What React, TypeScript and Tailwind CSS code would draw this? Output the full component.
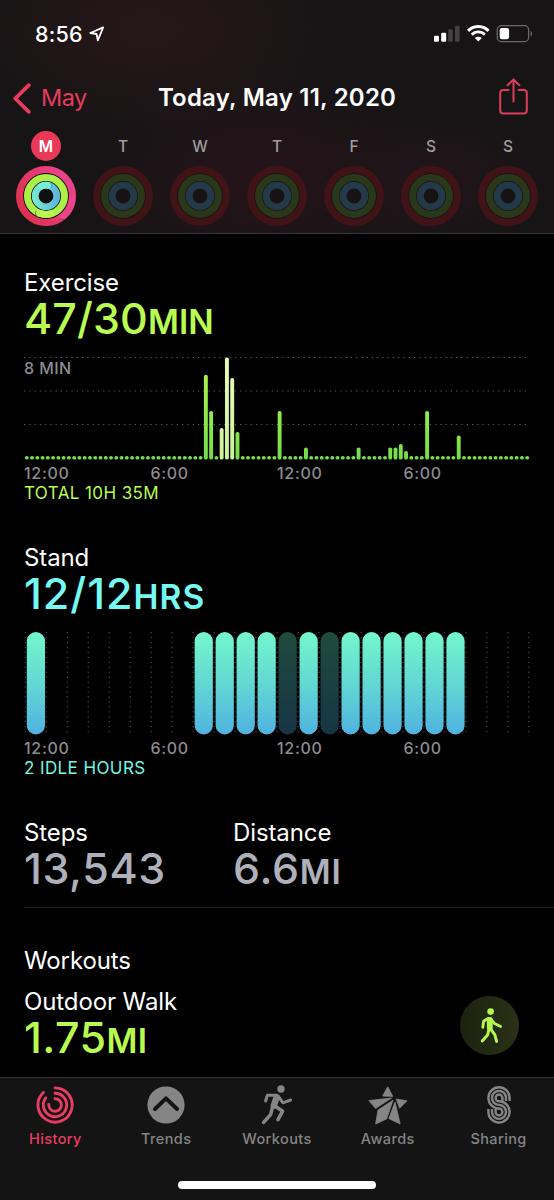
import type { ReactNode } from 'react'

const weekDays = ['M', 'T', 'W', 'T', 'F', 'S', 'S']
const hours = ['12:00', '6:00', '12:00', '6:00']

// Top of each bar inside the 112px tall exercise chart, keyed by quarter hour
const exerciseBars: Record<number, { top: number; active?: boolean }> = {
  34: { top: 24.8 },
  35: { top: 61 },
  37: { top: 78, active: true },
  38: { top: 7.5, active: true },
  39: { top: 28, active: true },
  40: { top: 82 },
  48: { top: 61 },
  53: { top: 97.5 },
  63: { top: 97.5 },
  69: { top: 97.5 },
  70: { top: 97.5 },
  71: { top: 94 },
  72: { top: 101 },
  76: { top: 61 },
  82: { top: 85.5 },
}

const stoodHours = [0, 8, 9, 10, 11, 13, 15, 16, 17, 18, 19, 20]
const idleHours = [12, 14]

function Rings({ active }: { active: boolean }) {
  if (!active) {
    return (
      <svg className="h-[60px] w-[60px]" viewBox="-30 -30 60 60" fill="none">
        <circle r="26.2" stroke="#401317" strokeWidth="7.4" />
        <circle r="22.7" fill="#171315" />
        <circle r="18.4" stroke="#29381a" strokeWidth="7" />
        <circle r="10.8" stroke="#253a49" strokeWidth="6.8" />
      </svg>
    )
  }
  return (
    <svg className="h-[60px] w-[60px]" viewBox="-30 -30 60 60" fill="none">
      <defs>
        <linearGradient id="move" x1="0" y1="1" x2="1" y2="0.4">
          <stop offset="0" stopColor="#dd2f48" />
          <stop offset="1" stopColor="#ea4287" />
        </linearGradient>
        <linearGradient id="stand-ring" x1="0" y1="0" x2="1" y2="0">
          <stop offset="0" stopColor="#75e8d4" />
          <stop offset="1" stopColor="#5fb9dc" />
        </linearGradient>
      </defs>
      <circle r="26.2" stroke="url(#move)" strokeWidth="7.6" />
      <path d="M25.8 4.5 A26.2 26.2 0 0 1 16.7 20.2" stroke="#ec4488" strokeWidth="7.4" strokeLinecap="round" />
      <path d="M13.8 22.1 A3.7 3.7 0 0 0 18.5 23.3" stroke="#a52357" strokeWidth="0.8" />
      <circle r="22.9" fill="#0d1010" />
      <circle r="18.5" stroke="#adf04a" strokeWidth="7" />
      <circle r="10.8" stroke="url(#stand-ring)" strokeWidth="6.8" />
      <path d="M-6.6 17.3 A18.5 18.5 0 0 0 5 17.8" stroke="#b8f850" strokeWidth="6.9" strokeLinecap="round" />
      <path d="M-8.2 20.7 A3.7 3.7 0 0 1 -9.8 15.2" stroke="#4f8b22" strokeWidth="1" />
      <path d="M-4 -10 A10.8 10.8 0 0 1 2.2 -10.6" stroke="#78efd8" strokeWidth="6.7" strokeLinecap="round" />
      <path d="M3.4 -14 A3.7 3.7 0 0 1 4.6 -7.8" stroke="#3c8b9b" strokeWidth="0.8" />
    </svg>
  )
}

function StatusBar() {
  return (
    <div className="flex h-[68px] items-center justify-between pr-[21px] pl-[35px]">
      <div className="flex items-center gap-[6px]">
        <span className="text-[21.5px] leading-7 font-medium tracking-[0.2px]">8:56</span>
        <svg className="h-4 w-4" viewBox="0 0 16 16" fill="none" stroke="#fff" strokeWidth="1.8" strokeLinejoin="round">
          <path d="M14.2 1.4 L1.2 7 L7.6 8 L8.8 14.3 Z" />
        </svg>
      </div>
      <svg className="h-[18px] w-[99px]" viewBox="0 0 99 18" fill="none">
        <rect x="0" y="10.7" width="5" height="6" rx="1.2" fill="#fff" />
        <rect x="7.2" y="7.7" width="5" height="9" rx="1.2" fill="#fff" />
        <rect x="14.2" y="4.2" width="4.6" height="12.5" rx="1.2" fill="#434143" />
        <rect x="21" y="0.8" width="4.6" height="15.9" rx="1.2" fill="#434143" />
        <g stroke="#fff" strokeWidth="3">
          <path d="M34.1 5.9 A14 14 0 0 1 54.5 5.9" />
          <path d="M37.8 9.7 A9 9 0 0 1 50.8 9.7" strokeWidth="2.8" />
        </g>
        <path d="M44.3 16.6 L40.8 13.1 A5 5 0 0 1 47.8 13.1 Z" fill="#fff" />
        <rect x="63.2" y="0.7" width="31.4" height="15.9" rx="4.2" stroke="#6b696b" strokeWidth="1.3" />
        <rect x="65.7" y="3" width="9.4" height="11.2" rx="2.2" fill="#fff" />
        <path d="M96.6 5.7 A3.4 3.4 0 0 1 96.6 11.5 Z" fill="#6b696b" />
      </svg>
    </div>
  )
}

function Header() {
  return (
    <header className="h-[234px] border-b border-[#39373a] bg-[#161415] bg-[radial-gradient(ellipse_200px_110px_at_150px_30px,#271719,transparent),radial-gradient(ellipse_190px_110px_at_260px_175px,#25141a,transparent),radial-gradient(ellipse_130px_90px_at_440px_180px,#21151a,transparent)]">
      <StatusBar />
      <div className="flex h-[60px] items-center justify-between pr-[26px] pl-[13px]">
        <div className="flex w-[100px] items-center gap-[10px] text-[#e63d5c]">
          <svg className="h-[31px] w-[18px]" viewBox="0 0 18 31" fill="none" stroke="currentColor" strokeWidth="3.8" strokeLinecap="round" strokeLinejoin="round">
            <path d="M15.8 2.2 L2.3 15.5 L15.8 28.8" />
          </svg>
          <span className="text-[23.5px] leading-8 tracking-[-0.6px]">May</span>
        </div>
        <h1 className="text-[24px] leading-8 font-semibold tracking-[0.22px] whitespace-nowrap">Today, May 11, 2020</h1>
        <div className="flex w-[87px] justify-end pb-[3px]">
          <svg className="h-[37px] w-[29px]" viewBox="0 0 29 37" fill="none" stroke="#dc3d5a" strokeWidth="2" strokeLinecap="round" strokeLinejoin="round">
            <path d="M9.5 12 H4.2 A3 3 0 0 0 1.2 15 V32.6 A3 3 0 0 0 4.2 35.6 H24.8 A3 3 0 0 0 27.8 32.6 V15 A3 3 0 0 0 24.8 12 H19.5" />
            <path d="M14.5 23.5 V1.5 M8.6 7.3 L14.5 1.4 L20.4 7.3" />
          </svg>
        </div>
      </div>
      <div className="flex justify-between pr-[16px] pl-[16px]">
        {weekDays.map((day, i) => (
          <div key={i} className="flex w-[60px] flex-col items-center gap-[5px] pt-[3px]">
            <span
              className={
                i === 0
                  ? 'flex h-[30px] w-[30px] items-center justify-center rounded-full bg-[#e83a57] pt-px text-[15.5px] font-semibold'
                  : 'flex h-[30px] w-[30px] items-center justify-center pt-px text-[15.5px] font-medium text-[#a19c9f]'
              }
            >
              {day}
            </span>
            <Rings active={i === 0} />
          </div>
        ))}
      </div>
    </header>
  )
}

function Metric({ label, value, unit, className }: { label: string; value: string; unit?: string; className: string }) {
  return (
    <div>
      <h2 className="h-8 pt-px text-[24px] leading-8 font-normal tracking-[-0.1px]">{label}</h2>
      <p className={`h-10 text-[43px] leading-10 font-medium whitespace-nowrap ${className}`}>
        {value}
        {unit && <span className="text-[33.5px] leading-none font-semibold">{unit}</span>}
      </p>
    </div>
  )
}

function HourLabels() {
  return (
    <div className="grid w-[506px] grid-cols-4 text-[16px] leading-5 font-medium tracking-[0.7px] text-[#8d8c91]">
      {hours.map((hour, i) => (
        <span key={i}>{hour}</span>
      ))}
    </div>
  )
}

function ExerciseChart() {
  return (
    <div className="relative mt-3 h-[113px]">
      <svg className="h-[112px] w-[508px]" viewBox="0 0 508 112" fill="none">
        <defs>
          <linearGradient id="exercise" x1="0" y1="7" x2="0" y2="110" gradientUnits="userSpaceOnUse">
            <stop offset="0" stopColor="#b4f84e" />
            <stop offset="1" stopColor="#74dd49" />
          </linearGradient>
          <linearGradient id="workout" x1="0" y1="7" x2="0" y2="110" gradientUnits="userSpaceOnUse">
            <stop offset="0" stopColor="#e8fdb8" />
            <stop offset="1" stopColor="#cdf09c" />
          </linearGradient>
        </defs>
        {[7.5, 41, 74.5].map((y) => (
          <path key={y} d={`M0 ${y} H505`} stroke="#59595b" strokeWidth="1.1" strokeDasharray="1.3 3.97" />
        ))}
        {Array.from({ length: 96 }, (_, i) => {
          const bar = exerciseBars[i]
          const top = bar ? bar.top : 105.9
          return (
            <rect
              key={i}
              x={0.8 + i * 5.268}
              y={top}
              width="3.9"
              height={109.6 - top}
              rx="1.85"
              fill={bar?.active ? 'url(#workout)' : 'url(#exercise)'}
            />
          )
        })}
      </svg>
      <span className="absolute top-2 left-0 text-[16px] leading-5 font-medium tracking-[0.4px] text-[#8d8c91]">8 MIN</span>
    </div>
  )
}

function StandChart() {
  return (
    <div className="mt-3 h-[113px]">
      <svg className="h-[112px] w-[508px]" viewBox="0 0 508 112">
        <defs>
          <linearGradient id="stand" x1="0" y1="0" x2="0" y2="1">
            <stop offset="0" stopColor="#74f7cc" />
            <stop offset="0.5" stopColor="#62d8d3" />
            <stop offset="1" stopColor="#50b2e0" />
          </linearGradient>
          <linearGradient id="idle" x1="0" y1="0" x2="0" y2="1">
            <stop offset="0" stopColor="#204b3e" />
            <stop offset="1" stopColor="#163545" />
          </linearGradient>
        </defs>
        {Array.from({ length: 25 }, (_, i) => (
          <path key={i} d={`M${1.3 + i * 20.98} 7 V108`} stroke="#4c4c4e" strokeWidth="1.1" strokeDasharray="1.3 3.65" />
        ))}
        {stoodHours.map((h) => (
          <rect key={h} x={2.8 + h * 20.98} y="7" width="18.2" height="102.5" rx="9.1" fill="url(#stand)" />
        ))}
        {idleHours.map((h) => (
          <rect key={h} x={2.8 + h * 20.98} y="7" width="18.2" height="102.5" rx="9.1" fill="url(#idle)" />
        ))}
      </svg>
    </div>
  )
}

function WalkIcon() {
  return (
    <svg className="h-10 w-10" viewBox="0 0 40 40" fill="none" stroke="#b4f84e" strokeLinecap="round" strokeLinejoin="round">
      <circle cx="20.6" cy="5.6" r="3.3" fill="#b4f84e" stroke="none" />
      <path d="M19.8 14 V21.5" strokeWidth="5.8" />
      <path d="M18 12.4 L13.6 15.2 L12.8 21.3" strokeWidth="2.8" />
      <path d="M21 13 L24.6 17.6 L30.6 20.4" strokeWidth="2.8" />
      <path d="M19 23 L17.6 29 L12.2 35" strokeWidth="3" />
      <path d="M20.6 23 L24.8 28.6 L26.6 35.4" strokeWidth="3" />
    </svg>
  )
}

function HistoryIcon() {
  return (
    <svg className="h-10 w-10" viewBox="-20 -20 40 40" fill="none" stroke="currentColor" strokeWidth="2.9" strokeLinecap="round">
      <path d="M0 -17.1 A17.1 17.1 0 1 1 -11.6 -12.5" />
      <path d="M0 -11.7 A11.7 11.7 0 1 1 -9.2 -7.2" />
      <path d="M0 -6.3 A6.3 6.3 0 1 1 -6.2 -0.6" />
    </svg>
  )
}

function TrendsIcon() {
  return (
    <svg className="h-10 w-10" viewBox="-20 -20 40 40" fill="none">
      <circle r="18.6" fill="currentColor" />
      <path d="M-11 4 L0 -6.6 L11 4" stroke="#141414" strokeWidth="4" strokeLinecap="round" strokeLinejoin="round" />
    </svg>
  )
}

function RunIcon() {
  return (
    <svg className="h-10 w-10" viewBox="0 0 40 40" fill="none" stroke="currentColor" strokeLinecap="round" strokeLinejoin="round">
      <circle cx="24" cy="4" r="3.7" fill="currentColor" stroke="none" />
      <path d="M19.6 12.4 L16.8 20.6" strokeWidth="6.4" />
      <path d="M20 10.2 L10.4 10.2 L8.6 16" strokeWidth="3" />
      <path d="M21.4 11.5 L26 17.8 L33.6 15" strokeWidth="3" />
      <path d="M18 21 L25.6 26.2 L21 34.6" strokeWidth="3.6" />
      <path d="M15.4 22.6 L13.6 29.6 L6.6 37.4" strokeWidth="3.6" />
    </svg>
  )
}

function AwardsIcon() {
  return (
    <svg className="h-10 w-10" viewBox="0 0 40 40" fill="currentColor" stroke="currentColor" strokeWidth="0.8" strokeLinejoin="round">
      <path d="M19.8 1.8 L24.8 11.4 L14.6 11 Z" />
      <path d="M0.8 15.6 L23.6 13 L7.6 23.4 Z" />
      <path d="M39 15.8 L28.2 14 L31.6 23.2 Z" />
      <path d="M10 25 L25 15.2 L18.6 34 L7.6 39 Z" />
      <path d="M27 17 L32.2 39 L20.8 33.6 Z" />
    </svg>
  )
}

function SharingIcon() {
  return (
    <svg className="h-10 w-10" viewBox="0 0 40 40" fill="none" stroke="currentColor" strokeWidth="2.4">
      <path d="M30.6 16 V12.9 A10.6 10.6 0 1 0 20 23.5 A3.4 3.4 0 1 1 16.6 26.9 V24" />
      <path d="M27 16 V12.9 A7 7 0 1 0 20 19.9 A7 7 0 1 1 13 26.9 V24" />
      <path d="M23.4 16 V12.9 A3.4 3.4 0 1 0 20 16.3 A10.6 10.6 0 1 1 9.4 26.9 V24" />
    </svg>
  )
}

const tabs: { label: string; icon: ReactNode }[] = [
  { label: 'History', icon: <HistoryIcon /> },
  { label: 'Trends', icon: <TrendsIcon /> },
  { label: 'Workouts', icon: <RunIcon /> },
  { label: 'Awards', icon: <AwardsIcon /> },
  { label: 'Sharing', icon: <SharingIcon /> },
]

function TabBar() {
  return (
    <nav className="flex h-[123px] flex-col items-center border-t border-[#333335] bg-[#141414]">
      <div className="grid w-full grid-cols-5 pt-[7px]">
        {tabs.map((tab, i) => (
          <div key={tab.label} className={`flex flex-col items-center gap-1 ${i === 0 ? 'text-[#e83d62]' : 'text-[#858585]'}`}>
            {tab.icon}
            <span className="text-[14.5px] leading-5 font-medium tracking-[0.4px]">{tab.label}</span>
          </div>
        ))}
      </div>
      <div className="mt-[32px] h-[8px] w-[198px] rounded-full bg-white" />
    </nav>
  )
}

export default function App() {
  return (
    <div className="flex h-[1200px] w-[554px] flex-col overflow-hidden bg-black font-['Inter',sans-serif] text-white">
      <Header />
      <main className="flex-1 overflow-hidden pt-8 pl-6">
        <section>
          <Metric label="Exercise" value="47/30" unit="MIN" className="tracking-[0.1px] text-[#b9fb50]" />
          <ExerciseChart />
          <HourLabels />
          <p className="text-[17px] leading-5 tracking-[0.4px] text-[#b9fb50]">TOTAL 10H 35M</p>
        </section>

        <section className="mt-[38px]">
          <Metric label="Stand" value="12/12" unit="HRS" className="tracking-[1px] text-[#76fbf2]" />
          <StandChart />
          <HourLabels />
          <p className="text-[17px] leading-5 tracking-[0.4px] text-[#76f5e0]">2 IDLE HOURS</p>
        </section>

        <section className="mt-[38px] flex h-[92px] border-b border-[#1d1d1f]">
          <div className="w-[209px]">
            <Metric label="Steps" value="13,543" className="tracking-[0.6px] text-[#aeb0bb]" />
          </div>
          <Metric label="Distance" value="6.6" unit="MI" className="tracking-[0.7px] text-[#aeb0bb]" />
        </section>

        <section className="pt-[37px]">
          <h2 className="text-[24px] leading-8 tracking-[-0.1px]">Workouts</h2>
          <div className="mt-2 flex items-start justify-between pr-[35px]">
            <Metric label="Outdoor Walk" value="1.75" unit="MI" className="tracking-[0.4px] text-[#b9fb50]" />
            <div className="mt-[11px] flex h-[59px] w-[59px] items-center justify-center rounded-full bg-linear-to-r from-[#1c2210] to-[#2a3116]">
              <WalkIcon />
            </div>
          </div>
        </section>
      </main>
      <TabBar />
    </div>
  )
}
